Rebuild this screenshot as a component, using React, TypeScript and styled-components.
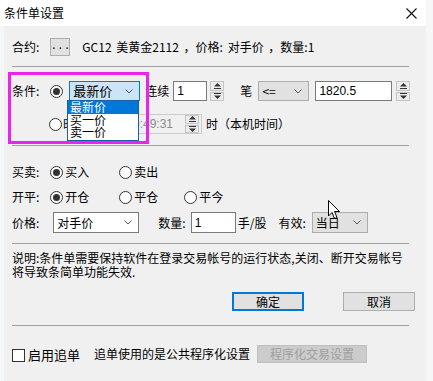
import React from 'react';
import styled, { createGlobalStyle } from 'styled-components';

const GlobalStyle = createGlobalStyle`
  body {
    margin: 0;
    background: #f6f7f9;
    font-family: "Noto Sans CJK SC", "Liberation Sans", sans-serif;
    font-size: 12px;
    color: #000;
  }
  * { box-sizing: border-box; }
`;

const Win = styled.div`
  width: 426px;
  height: 381px;
  display: flex;
  flex-direction: column;
`;

const TitleBar = styled.div`
  height: 26px;
  background: #fff;
  display: flex;
  align-items: center;
  padding: 0 9px 0 4px;
  flex-shrink: 0;
`;

const Title = styled.span`
  font-size: 12px;
  line-height: 14px;
  flex: 1;
`;

const Body = styled.div`
  flex: 1;
  margin-left: 4px;
  background: #f0f0f0;
  padding: 0 0 0 8px;
  display: flex;
  flex-direction: column;
  position: relative;
`;

const Row = styled.div<{ mt: number; h: number }>`
  display: flex;
  align-items: center;
  margin-top: ${p => p.mt}px;
  height: ${p => p.h}px;
  white-space: nowrap;
`;

const Label = styled.span<{ ml?: number }>`
  margin-left: ${p => p.ml ?? 0}px;
  line-height: 14px;
`;

const Sep = styled.div<{ mt: number }>`
  margin-top: ${p => p.mt}px;
  width: 397px;
  height: 1px;
  background: #a0a0a0;
  flex-shrink: 0;
`;

const SmallButton = styled.div`
  margin-left: 11px;
  width: 20px;
  height: 18px;
  background: #e1e1e1;
  border: 1px solid #adadad;
  display: flex;
  align-items: center;
  justify-content: center;
  font-family: "Liberation Mono", monospace;
  font-size: 11px;
  padding-bottom: 2px;
`;

const InfoText = styled.span`
  margin-left: 12px;
  line-height: 14px;
  word-spacing: 2px;
`;

const RadioCircle = styled.span<{ checked?: boolean; ml: number }>`
  margin-left: ${p => p.ml}px;
  width: 13px;
  height: 13px;
  border: 1px solid #333;
  border-radius: 50%;
  background: #fff;
  display: inline-flex;
  align-items: center;
  justify-content: center;
  flex-shrink: 0;
  &::after {
    content: '';
    width: 7px;
    height: 7px;
    border-radius: 50%;
    background: #333;
    display: ${p => (p.checked ? 'block' : 'none')};
  }
`;

const Option = styled.div<{ w: number; ml?: number }>`
  margin-left: ${p => p.ml ?? 0}px;
  width: ${p => p.w}px;
  display: flex;
  align-items: center;
  flex-shrink: 0;
`;

const SelectBox = styled.div<{ w: number; ml: number; variant: 'focus' | 'gray' | 'white' }>`
  margin-left: ${p => p.ml}px;
  width: ${p => p.w}px;
  height: 100%;
  border: 1px solid
    ${p => (p.variant === 'focus' ? '#0078d7' : p.variant === 'gray' ? '#adadad' : '#7a7a7a')};
  background: ${p => (p.variant === 'focus' ? '#cce4f7' : p.variant === 'gray' ? '#e1e1e1' : '#fff')};
  display: flex;
  align-items: center;
  padding: 0 6px 0 3px;
  font-size: ${p => (p.variant === 'focus' ? 13 : 12)}px;
  flex-shrink: 0;
`;

const SelectText = styled.span`
  flex: 1;
  line-height: 14px;
`;

const TextInput = styled.div<{ w: number; ml: number; disabled?: boolean }>`
  margin-left: ${p => p.ml}px;
  width: ${p => p.w}px;
  height: 100%;
  border: 1px solid ${p => (p.disabled ? '#cccccc' : '#7a7a7a')};
  background: ${p => (p.disabled ? '#f0f0f0' : '#fff')};
  color: ${p => (p.disabled ? '#8a8a8a' : '#000')};
  display: flex;
  align-items: center;
  padding: 0 3px;
  font-family: "Liberation Sans", sans-serif;
  font-size: 12px;
  flex-shrink: 0;
`;

const TimeInput = styled(TextInput)`
  justify-content: flex-end;
  padding-right: 2px;
  gap: 12px;
`;

const Spin = styled.div<{ ml: number }>`
  margin-left: ${p => p.ml}px;
  width: 14px;
  height: 100%;
  display: flex;
  flex-direction: column;
  gap: 1px;
  flex-shrink: 0;
`;

const SpinBtn = styled.div`
  flex: 1;
  border: 1px solid #c4c4c4;
  background: #ececec;
  display: flex;
  align-items: center;
  justify-content: center;
`;

const Highlight = styled.div`
  position: absolute;
  left: 4px;
  top: 46px;
  width: 141px;
  height: 72px;
  border: 3px solid #ea24ea;
  pointer-events: none;
`;

const DropList = styled.div`
  position: absolute;
  left: 63px;
  top: 74px;
  width: 72px;
  border: 1px solid #1a5fa8;
  background: #fff;
  display: flex;
  flex-direction: column;
  padding-bottom: 1px;
`;

const DropItem = styled.div<{ active?: boolean }>`
  height: 12.5px;
  line-height: 12.5px;
  font-size: 12px;
  padding-left: 2px;
  background: ${p => (p.active ? '#0078d7' : '#fff')};
  color: ${p => (p.active ? '#fff' : '#000')};
`;

const ConditionBlock = styled.div`
  display: flex;
  flex-direction: column;
`;

const Note = styled.div`
  margin-top: 7px;
  line-height: 14px;
  font-size: 12px;
  width: 400px;
`;

const ButtonRow = styled.div`
  margin-top: 13px;
  height: 19px;
  display: flex;
  padding-left: 220px;
  gap: 39px;
`;

const DialogButton = styled.div<{ primary?: boolean }>`
  width: 72px;
  height: 19px;
  background: #e1e1e1;
  border: ${p => (p.primary ? '2px solid #0078d7' : '1px solid #adadad')};
  display: flex;
  align-items: center;
  justify-content: center;
  font-size: 12px;
`;

const CheckBox = styled.span`
  width: 13px;
  height: 13px;
  border: 1px solid #333;
  background: #fff;
  margin-top: 3px;
  flex-shrink: 0;
`;

const CheckLabel = styled.span`
  margin-left: 3px;
  margin-top: 3px;
  font-size: 13px;
  line-height: 14px;
`;

const DisabledButton = styled.div`
  margin-left: 7px;
  width: 110px;
  height: 18px;
  background: #cccccc;
  border: 1px solid #bfbfbf;
  color: #a0a0a0;
  display: flex;
  align-items: center;
  justify-content: center;
  font-size: 12px;
`;

const Cursor = styled.svg`
  position: absolute;
  left: 324px;
  top: 174px;
`;

const Chevron: React.FC = () => (
  <svg width="8" height="5" viewBox="0 0 8 5">
    <path d="M0.5 0.5 L4 4 L7.5 0.5" fill="none" stroke="#555" strokeWidth="1" />
  </svg>
);

const Spinner: React.FC<{ ml: number }> = ({ ml }) => (
  <Spin ml={ml}>
    <SpinBtn>
      <svg width="7" height="6" viewBox="0 0 7 6">
        <path d="M3.5 0 L7 3.5 L0 3.5 Z" fill="#333" />
        <rect x="0" y="5" width="7" height="1" fill="#333" />
      </svg>
    </SpinBtn>
    <SpinBtn>
      <svg width="7" height="6" viewBox="0 0 7 6">
        <rect x="0" y="0" width="7" height="1" fill="#333" />
        <path d="M0 2.5 L7 2.5 L3.5 6 Z" fill="#333" />
      </svg>
    </SpinBtn>
  </Spin>
);

const Select: React.FC<{ w: number; ml: number; variant: 'focus' | 'gray' | 'white'; text: string }> = ({
  w,
  ml,
  variant,
  text,
}) => (
  <SelectBox w={w} ml={ml} variant={variant}>
    <SelectText>{text}</SelectText>
    <Chevron />
  </SelectBox>
);

const App: React.FC = () => (
  <>
    <GlobalStyle />
    <Win>
      <TitleBar>
        <Title>条件单设置</Title>
        <svg width="11" height="11" viewBox="0 0 11 11">
          <path d="M0.5 0.5 L10.5 10.5 M10.5 0.5 L0.5 10.5" stroke="#111" strokeWidth="1.1" />
        </svg>
      </TitleBar>
      <Body>
        <Row mt={12} h={18}>
          <Label>合约:</Label>
          <SmallButton>...</SmallButton>
          <InfoText>GC12 美黄金2112 ，价格: 对手价 ，数量:1</InfoText>
        </Row>
        <Sep mt={10} />

        <ConditionBlock>
          <Row mt={14} h={20}>
            <Label>条件:</Label>
            <RadioCircle ml={11} checked />
            <Select w={71} ml={6} variant="focus" text="最新价" />
            <Label ml={5}>连续</Label>
            <TextInput w={34} ml={4}>1</TextInput>
            <Spinner ml={3} />
            <Label ml={16}>笔</Label>
            <Select w={51} ml={6} variant="gray" text="<=" />
            <TextInput w={77} ml={6}>1820.5</TextInput>
            <Spinner ml={4} />
          </Row>
          <Row mt={13} h={20}>
            <RadioCircle ml={37} />
            <Label ml={1}>时间</Label>
            <TimeInput w={113} ml={2} disabled>
              <span>10:49:31</span>
              <Spinner ml={0} />
            </TimeInput>
            <Label ml={4}>时（本机时间）</Label>
          </Row>
        </ConditionBlock>
        <Sep mt={11} />

        <Row mt={18} h={16}>
          <Label>买卖:</Label>
          <Option w={69} ml={11}>
            <RadioCircle ml={0} checked />
            <Label ml={2}>买入</Label>
          </Option>
          <Option w={65}>
            <RadioCircle ml={0} />
            <Label ml={2}>卖出</Label>
          </Option>
        </Row>
        <Row mt={9} h={16}>
          <Label>开平:</Label>
          <Option w={69} ml={11}>
            <RadioCircle ml={0} checked />
            <Label ml={2}>开仓</Label>
          </Option>
          <Option w={65}>
            <RadioCircle ml={0} />
            <Label ml={2}>平仓</Label>
          </Option>
          <Option w={65}>
            <RadioCircle ml={0} />
            <Label ml={2}>平今</Label>
          </Option>
        </Row>
        <Row mt={7} h={21}>
          <Label>价格:</Label>
          <Select w={86} ml={14} variant="white" text="对手价" />
          <Label ml={19}>数量:</Label>
          <TextInput w={45} ml={5}>1</TextInput>
          <Label ml={2}>手/股</Label>
          <Label ml={12}>有效:</Label>
          <Select w={56} ml={6} variant="gray" text="当日" />
        </Row>
        <Sep mt={10} />

        <Note>
          说明:条件单需要保持软件在登录交易帐号的运行状态,关闭、断开交易帐号
          <br />
          将导致条简单功能失效.
        </Note>

        <ButtonRow>
          <DialogButton primary>确定</DialogButton>
          <DialogButton>取消</DialogButton>
        </ButtonRow>
        <Sep mt={14} />

        <Row mt={18} h={19}>
          <CheckBox />
          <CheckLabel>启用追单</CheckLabel>
          <Label ml={14}>追单使用的是公共程序化设置</Label>
          <DisabledButton>程序化交易设置</DisabledButton>
        </Row>

        <Highlight />
        <DropList>
          <DropItem active>最新价</DropItem>
          <DropItem>买一价</DropItem>
          <DropItem>卖一价</DropItem>
        </DropList>
        <Cursor width="13" height="20" viewBox="0 0 13 20">
          <path d="M0.5 0.5 L0.5 16 L4 12.5 L6.5 18.5 L9 17.5 L6.5 11.5 L11.5 11.5 Z" fill="#fff" stroke="#000" strokeWidth="1" />
        </Cursor>
      </Body>
    </Win>
  </>
);

export default App;
